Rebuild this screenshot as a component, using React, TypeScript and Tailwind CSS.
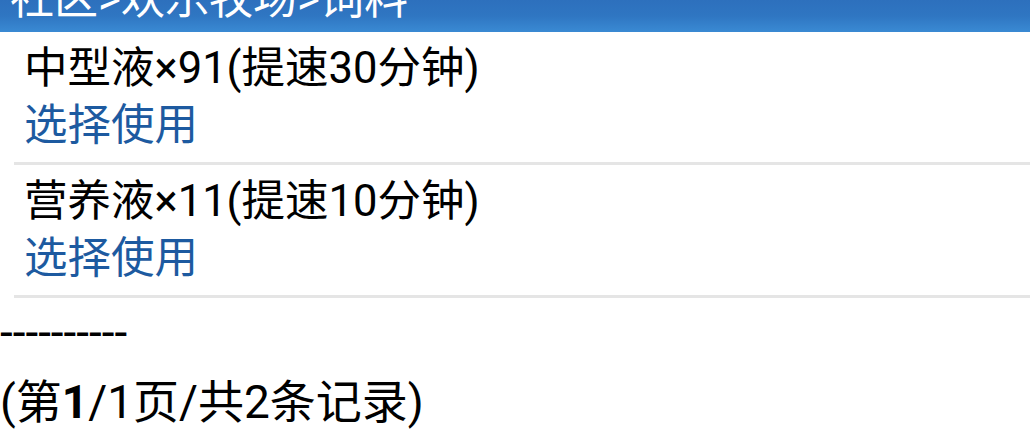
const items = [
  { name: "中型液×91(提速30分钟)" },
  { name: "营养液×11(提速10分钟)" },
];

export default function App() {
  return (
    <div
      className="w-[1030px] h-[440px] overflow-hidden bg-white text-black text-[44px] leading-[58px]"
      style={{ fontFamily: 'Roboto, "Noto Sans CJK SC", sans-serif' }}
    >
      {/* Title bar, scrolled partly off the top */}
      <div className="h-[32px] overflow-hidden bg-gradient-to-b from-[#2d70bd] via-[#2f76c2] to-[#3a8ad3]">
        <div className="mt-[-30px] pl-[10px] text-white whitespace-nowrap">社区&gt;欢乐牧场&gt;饲料</div>
      </div>

      <div>
        {items.map((item, i) => (
          <div key={i} className="ml-[14px] py-[8px] pl-[10px] border-b-[3px] border-[#e5e5e5] text-[43.5px] leading-[57px]">
            <div className="whitespace-nowrap">{item.name}</div>
            <div className="text-[#1d5aa0]">选择使用</div>
          </div>
        ))}
      </div>

      <div className="text-[46px]">
        <div className="mt-[5px]">----------</div>
        <div className="mt-[12px] whitespace-nowrap">
          (第<b>1</b>/1页/共2条记录)
        </div>
      </div>
    </div>
  );
}
